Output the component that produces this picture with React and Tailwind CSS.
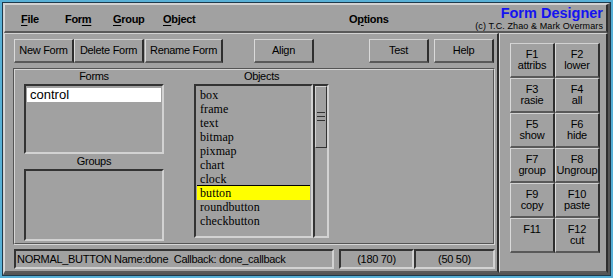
import React from 'react';

const sans = "font-['Liberation_Sans',Arial,sans-serif]";
const serif = "font-['Liberation_Serif','Times_New_Roman',serif]";
const up = "border-t border-l border-b-2 border-r-2 border-t-[#d2d2d2] border-l-[#dadada] border-b-[#595959] border-r-[#2e2e2e]";
const down = "border-2 border-t-[#333] border-l-[#333] border-b-[#d2d2d2] border-r-[#d2d2d2]";

const objects = ['box', 'frame', 'text', 'bitmap', 'pixmap', 'chart', 'clock', 'button', 'roundbutton', 'checkbutton'];

const fkeys = [
  ['F1', 'attribs'], ['F2', 'lower'],
  ['F3', 'rasie'], ['F4', 'all'],
  ['F5', 'show'], ['F6', 'hide'],
  ['F7', 'group'], ['F8', 'Ungroup'],
  ['F9', 'copy'], ['F10', 'paste'],
  ['F11', '\u00a0'], ['F12', 'cut'],
];

const Btn = ({ w, className = '', children }) => (
  <div className={`${up} ${w} h-[24px] flex items-center justify-center text-[11px] tracking-[-0.3px] ${className}`}>
    {children}
  </div>
);

const Menu = ({ w, children }) => (
  <div className={`${w} shrink-0 font-bold text-[11px] tracking-[-0.3px]`}>{children}</div>
);

export default function App() {
  return (
    <div className={`w-[613px] h-[278px] bg-[#58b0d6] p-[2px] ${sans} text-black`}>
      <div className="w-full h-full bg-[#1d3a4c] p-px">
        <div className="w-full h-full bg-[#a1a1a1] border-t border-l border-b-2 border-r-2 border-t-[#d2d2d2] border-l-[#d2d2d2] border-b-[#555] border-r-[#555] flex flex-col">
          {/* menu bar */}
          <div className={`${up} h-[29px] shrink-0 flex items-start`}>
            <div className="flex items-center h-full pl-[16px] pt-[2px] leading-[13px]">
              <Menu w="w-[44px]"><span className="underline underline-offset-2">F</span>ile</Menu>
              <Menu w="w-[48px]">For<span className="underline underline-offset-2">m</span></Menu>
              <Menu w="w-[50px]"><span className="underline underline-offset-2">G</span>roup</Menu>
              <Menu w="w-[186px]"><span className="underline underline-offset-2">O</span>bject</Menu>
              <Menu w="w-[60px]">O<span className="underline underline-offset-2">p</span>tions</Menu>
            </div>
            <div className="ml-auto pr-[3px] pt-px flex flex-col items-end">
              <div className="text-[14.5px] leading-[15px] font-bold text-[#1414f0]">Form Designer</div>
              <div className="text-[9px] leading-[10px] tracking-[0.1px]">(c) T.C. Zhao &amp; Mark Overmars</div>
            </div>
          </div>

          <div className="flex flex-1 min-h-0">
            {/* left section */}
            <div className={`${up} w-[495px] h-full flex flex-col`}>
              <div className="flex ml-[9px] mt-[5px]">
                <Btn w="w-[60px]">New Form</Btn>
                <Btn w="w-[70px]">Delete Form</Btn>
                <Btn w="w-[78px]" className="ml-px">Rename Form</Btn>
                <Btn w="w-[60px]" className="ml-[31px]">Align</Btn>
                <Btn w="w-[60px]" className="ml-[55px]">Test</Btn>
                <Btn w="w-[60px]" className="ml-[5px]">Help</Btn>
              </div>

              {/* engraved frame */}
              <div className="ml-[8px] mt-[5px] w-[482px] h-[177px] border-t border-l border-b border-r border-t-[#555] border-l-[#555] border-b-[#d6d6d6] border-r-[#d6d6d6]">
                <div className="w-full h-full border-t border-l border-b border-r border-t-[#d6d6d6] border-l-[#d6d6d6] border-b-[#555] border-r-[#555] flex pl-[9px]">
                  <div className="w-[140px] flex flex-col">
                    <div className="h-[14px] text-center text-[11px] leading-[13px] tracking-[-0.3px]">Forms</div>
                    <div className={`${down} h-[70px] pt-[2px] px-px`}>
                      <div className="h-[14px] bg-white pl-[3px] text-[13px] leading-[14px]">control</div>
                    </div>
                    <div className="h-[15px] text-center text-[11px] leading-[14px] tracking-[-0.3px]">Groups</div>
                    <div className={`${down} h-[72px]`} />
                  </div>

                  <div className="w-[135px] ml-[30px] flex flex-col">
                    <div className="h-[14px] text-center text-[11px] leading-[13px] tracking-[-0.3px]">Objects</div>
                    <div className="flex h-[154px]">
                      <div className={`${down} w-[119px] h-full pt-[2px] ${serif} text-[12px] tracking-[0.1px]`}>
                        {objects.map((o) => (
                          <div
                            key={o}
                            className={`mx-px h-[14px] pl-[3px] leading-[14px] ${o === 'button' ? 'bg-[#ffff00] shadow-[0_-1px_0_#000]' : ''}`}
                          >
                            {o}
                          </div>
                        ))}
                      </div>
                      <div className={`${down} w-[16px] h-[154px]`}>
                        <div className="h-[62px] border-t border-l border-b border-r border-t-[#d2d2d2] border-l-[#d2d2d2] border-b-[#333] border-r-[#333] flex flex-col items-center justify-center gap-[3px] pb-[2px]">
                          <div className="w-[8px] h-px bg-[#333]" />
                          <div className="w-[8px] h-px bg-[#333]" />
                          <div className="w-[8px] h-px bg-[#333]" />
                        </div>
                      </div>
                    </div>
                  </div>
                </div>
              </div>

              {/* status bar */}
              <div className="flex ml-[9px] mt-[4px] h-[20px] text-[11px] tracking-[-0.3px]">
                <div className={`${down} w-[320px] flex items-center pl-px`}>NORMAL_BUTTON Name:done&nbsp; Callback: done_callback</div>
                <div className={`${down} w-[75px] ml-[5px] flex items-center justify-center`}>(180 70)</div>
                <div className={`${down} w-[81px] flex items-center justify-center`}>(50 50)</div>
              </div>
            </div>

            {/* right panel */}
            <div className={`${up} flex-1 h-full`}>
              <div className="ml-[10px] mt-[9px] grid grid-cols-[45px_45px] auto-rows-[35px]">
                {fkeys.map(([k, l]) => (
                  <div key={k} className={`${up} flex flex-col items-center justify-center text-[11px] leading-[11px] tracking-[-0.2px]`}>
                    <span>{k}</span>
                    <span>{l}</span>
                  </div>
                ))}
              </div>
            </div>
          </div>
        </div>
      </div>
    </div>
  );
}
